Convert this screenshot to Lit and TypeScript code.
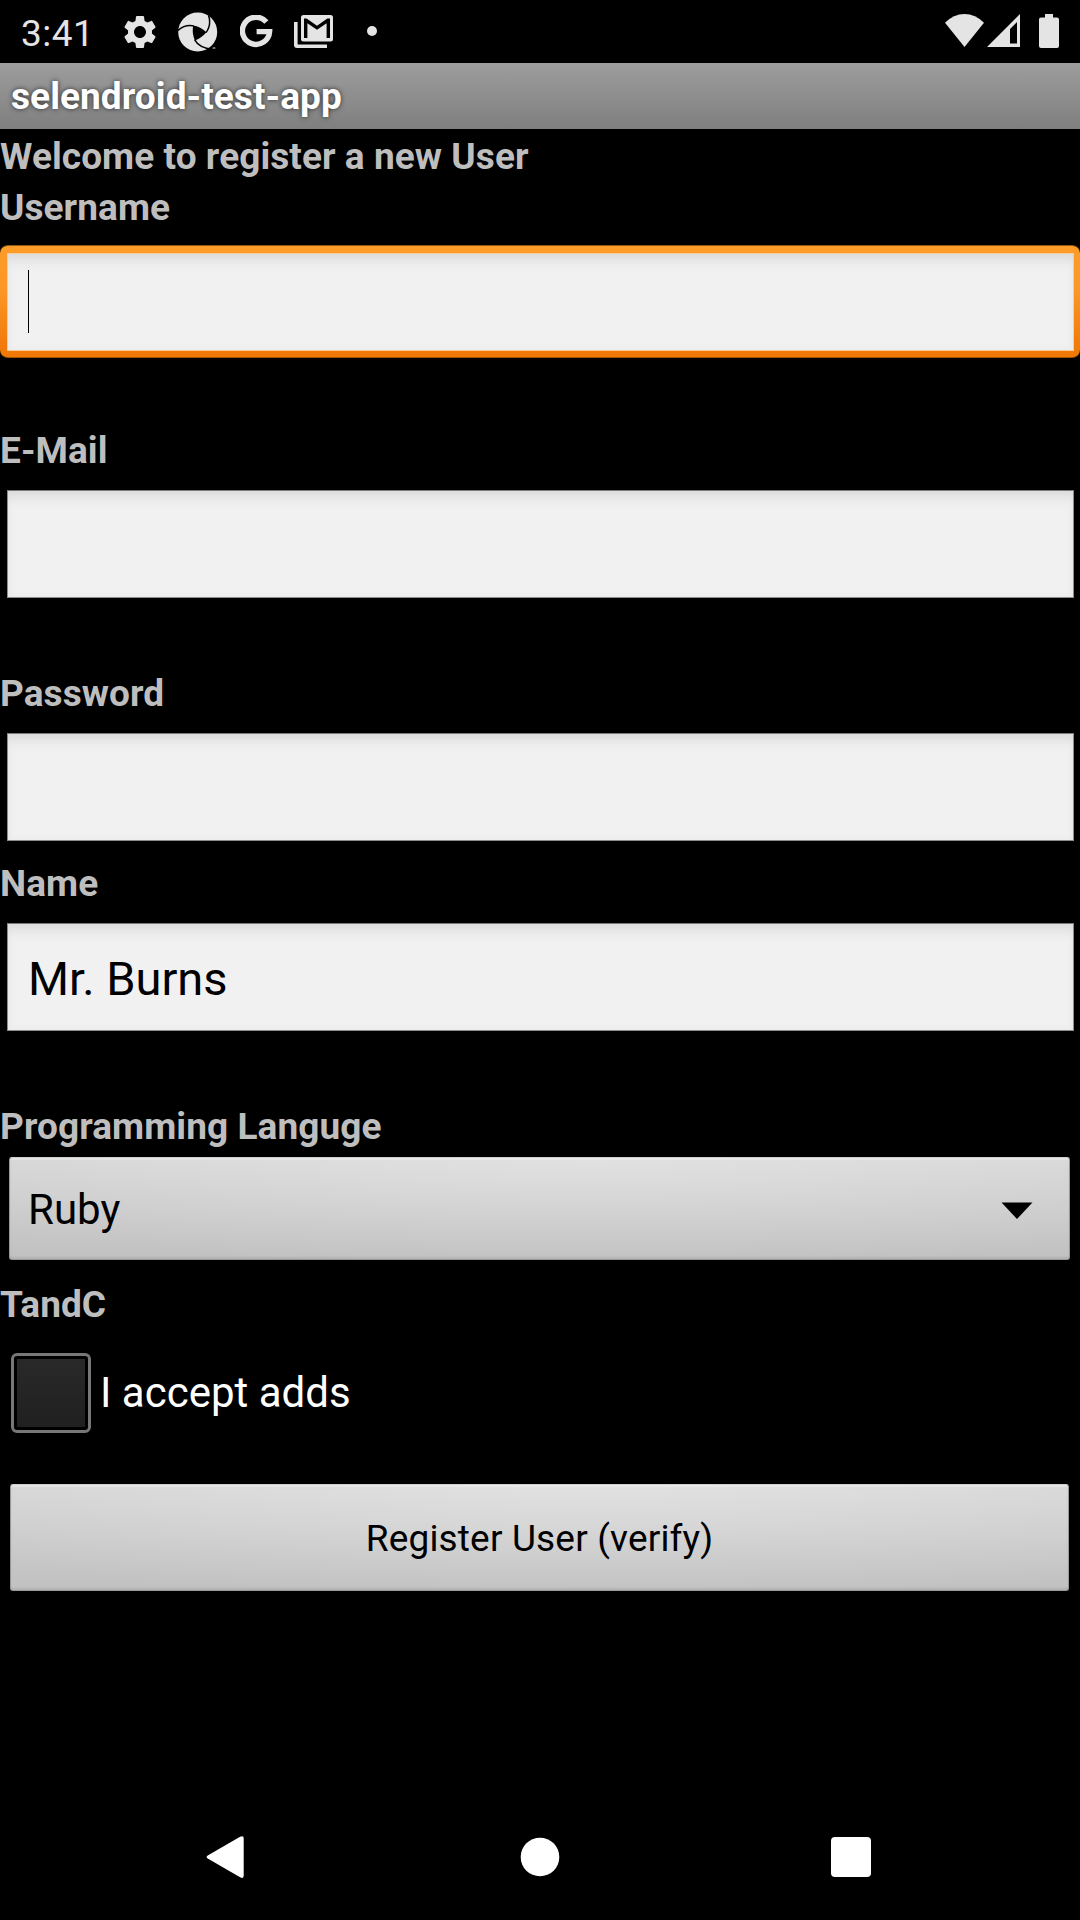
import { LitElement, html, css, svg, nothing } from "lit";
import { customElement, property } from "lit/decorators.js";

@customElement("status-bar")
class StatusBar extends LitElement {
  static styles = css`
    :host {
      display: flex;
      height: 63px;
      box-sizing: border-box;
      padding: 0 21px 0 21px;
      justify-content: space-between;
      align-items: flex-start;
      color: #e4e4e4;
      background: #000;
    }
    .left,
    .right {
      display: flex;
      align-items: flex-start;
      height: 63px;
    }
    .clock {
      width: 99px;
      font-size: 37px;
      line-height: 67px;
      letter-spacing: 0.5px;
      white-space: nowrap;
    }
    svg {
      display: block;
      fill: #e4e4e4;
    }
    .gear { margin: 11.7px 0 0 0; }
    .shutter { margin: 11.5px 0 0 18px; }
    .g { margin: 15px 0 0 22px; }
    .mail { margin: 15px 0 0 21px; }
    .dot {
      width: 10px;
      height: 10px;
      margin: 26px 0 0 34px;
      border-radius: 50%;
      background: #e4e4e4;
    }
    .wifi { margin: 14px 0 0; }
    .signal { margin: 14px 0 0 3px; }
    .battery { margin: 14px 0 0 19px; }
  `;

  render() {
    return html`
      <div class="left">
        <span class="clock">3:41</span>
        <svg class="gear" width="40" height="40" viewBox="0 0 24 24">
          <path d="M19.14,12.94c0.04-0.3,0.06-0.61,0.06-0.94c0-0.32-0.02-0.64-0.07-0.94l2.03-1.58c0.18-0.14,0.23-0.41,0.12-0.61l-1.92-3.32c-0.12-0.22-0.37-0.29-0.59-0.22l-2.39,0.96c-0.5-0.38-1.03-0.7-1.62-0.94L14.4,2.81c-0.04-0.24-0.24-0.41-0.48-0.41h-3.84c-0.24,0-0.43,0.17-0.47,0.41L9.25,5.35C8.66,5.59,8.12,5.92,7.63,6.29L5.24,5.33c-0.22-0.08-0.47,0-0.59,0.22L2.74,8.87C2.62,9.08,2.66,9.34,2.86,9.48l2.03,1.58C4.84,11.36,4.8,11.69,4.8,12s0.02,0.64,0.07,0.94l-2.03,1.58c-0.18,0.14-0.23,0.41-0.12,0.61l1.92,3.32c0.12,0.22,0.37,0.29,0.59,0.22l2.39-0.96c0.5,0.38,1.03,0.7,1.62,0.94l0.36,2.54c0.05,0.24,0.24,0.41,0.48,0.41h3.84c0.24,0,0.44-0.17,0.47-0.41l0.36-2.54c0.59-0.24,1.13-0.56,1.62-0.94l2.39,0.96c0.22,0.08,0.47,0,0.59-0.22l1.92-3.32c0.12-0.22,0.07-0.47-0.12-0.61L19.14,12.94z M12,15.6c-1.98,0-3.6-1.62-3.6-3.6s1.62-3.6,3.6-3.6s3.6,1.62,3.6,3.6S13.98,15.6,12,15.6z"></path>
        </svg>
        <svg class="shutter" width="40" height="40" viewBox="0 0 40 40">
          <circle cx="19.7" cy="20" r="19.5"></circle>
          <path fill="#000" d="M15.2 13.6Q22.5 14.8 28.4 20.2Q24 25.6 16.9 28.4Q13.6 21 15.2 13.6Z"></path>
          <path fill="none" stroke="#000" stroke-width="1.5" d="M15.8 13.9Q6 12.4 0 18.6M28 20.6Q33.6 13 30.6 3.6M16.6 27.6Q21 36 34.5 37.2"></path>
          <rect x="34.5" y="35.6" width="3" height="1" rx=".5"></rect>
        </svg>
        <svg class="g" width="33" height="33" viewBox="0 0 33 33">
          <path fill="none" stroke="#e4e4e4" stroke-width="5.4" d="M26.4 7A13.6 13.6 0 1 0 29.6 16.6H16.6"></path>
        </svg>
        <svg class="mail" width="39" height="33" viewBox="0 0 39 33">
          <path d="M0 7H3.6V29.4H33V33H3Q0 33 0 30Z"></path>
          <path fill-rule="evenodd" d="M9.5 0H36.5Q39 0 39 2.5V24Q39 26.5 36.5 26.5H9.5Q7 26.5 7 24V2.5Q7 0 9.5 0ZM10 3.4V23H13.4V8.2L23 14.8L32.6 8.2V23H36V3.4H33.4L23 10.8L12.6 3.4Z"></path>
        </svg>
        <span class="dot"></span>
      </div>
      <div class="right">
        <svg class="wifi" width="39" height="33" viewBox="0 0 39 33">
          <path d="M0 8.8Q8.6 0 19.5 0T39 8.8L19.5 33Z"></path>
        </svg>
        <svg class="signal" width="33" height="33" viewBox="0 0 33 33">
          <path fill-rule="evenodd" d="M33 0V33H0ZM30 8L23 15V29.6H30Z"></path>
        </svg>
        <svg class="battery" width="20" height="34" viewBox="0 0 20 34">
          <path d="M6 0H14V3.4H18Q20 3.4 20 5.4V32Q20 34 18 34H2Q0 34 0 32V5.4Q0 3.4 2 3.4H6Z"></path>
        </svg>
      </div>
    `;
  }
}

@customElement("text-field")
class TextField extends LitElement {
  @property() value = "";
  @property({ type: Boolean }) active = false;

  static styles = css`
    :host {
      display: block;
    }
    .field {
      display: flex;
      align-items: center;
      box-sizing: border-box;
      height: 108px;
      margin: 0 6.5px;
      padding: 3px 0 0 20.5px;
      border: 1px solid #8c8c8c;
      border-top-color: #7a7a7a;
      background: #f1f1f1;
      box-shadow: inset 0 14px 14px -9px #d9d9d9, inset 0 0 7px #e8e8e8;
      color: #000;
      font-size: 47px;
      line-height: 56px;
    }
    .ring {
      height: 113px;
      box-sizing: border-box;
      padding: 6.5px 6.5px 6px;
      border-top: 1px solid #8a5415;
      border-bottom: 1px solid #a35304;
      border-radius: 8px;
      background: linear-gradient(#fd9c28 0%, #fb9726 40%, #f17a09 90%, #f07805 100%);
    }
    .ring .field {
      height: 98px;
      margin: 0;
      padding-top: 0;
      border-color: #f8cb98;
    }
    .caret {
      width: 1px;
      height: 63px;
      margin-bottom: 1px;
      background: #000;
    }
  `;

  render() {
    const field = html`<div class="field">
      ${this.active ? html`<span class="caret"></span>` : nothing}${this.value}
    </div>`;
    return this.active ? html`<div class="ring">${field}</div>` : field;
  }
}

@customElement("nav-bar")
class NavBar extends LitElement {
  static styles = css`
    :host {
      display: grid;
      grid-template-columns: repeat(3, 1fr);
      width: 936px;
      height: 126px;
      margin: 0 auto;
      align-items: center;
      justify-items: center;
    }
    svg {
      display: block;
      fill: #fff;
    }
  `;

  render() {
    const shapes = [
      svg`<path d="M1.7 19.6L34.1 .8Q37.7 -1 37.7 2.6V39.4Q37.7 43.2 34.1 41.2L1.7 22.6Q-.5 21 1.7 19.6Z"></path>`,
      svg`<circle cx="22" cy="21" r="19.3"></circle>`,
      svg`<rect x="1" y="1" width="40" height="40" rx="4"></rect>`,
    ];
    return shapes.map(
      (shape) => html`<svg width="44" height="42" viewBox="0 0 44 42" overflow="visible">${shape}</svg>`,
    );
  }
}

@customElement("app-root")
class AppRoot extends LitElement {
  static styles = css`
    :host {
      display: flex;
      flex-direction: column;
      width: 1080px;
      height: 1920px;
      overflow: hidden;
      background: #000;
      font-family: Roboto, "Liberation Sans", sans-serif;
    }
    .title {
      height: 66px;
      box-sizing: border-box;
      padding-left: 11px;
      background: linear-gradient(#9d9d9d, #7f7f7f);
      color: #fff;
      font-size: 37px;
      font-weight: 700;
      line-height: 68px;
      letter-spacing: 0.07px;
      text-shadow: 0 0 5px rgba(0, 0, 0, 0.7);
    }
    .form {
      flex: 1;
      display: flex;
      flex-direction: column;
      padding-top: 2px;
    }
    .label {
      height: 51px;
      color: #bebebe;
      font-size: 37px;
      font-weight: 700;
      line-height: 51px;
      letter-spacing: 0.07px;
    }
    .label + text-field { margin-top: 14px; }
    .label + text-field[active] { margin-top: 12px; }
    .email { margin-top: 67px; }
    .password { margin-top: 70px; }
    .name { margin-top: 17px; }
    .language { margin-top: 70px; }
    .terms { margin-top: 19px; }
    .select,
    .button {
      display: flex;
      align-items: center;
      box-sizing: border-box;
      border: 1px solid #989898;
      border-top-color: #cfcfcf;
      border-radius: 3px;
      background: radial-gradient(ellipse 75% 110% at 55% 0%, rgba(255, 255, 255, 0.3), rgba(255, 255, 255, 0)),
        linear-gradient(#d5d5d5, #c1c1c1);
      box-shadow: inset 0 2px 1px rgba(255, 255, 255, 0.3), inset 0 -2px 2px rgba(0, 0, 0, 0.08);
      color: #000;
    }
    .select {
      height: 103px;
      margin: 5px 10px 0 9px;
      padding: 2px 36px 0 18px;
      justify-content: space-between;
      font-size: 42px;
      line-height: 50px;
    }
    .arrow {
      display: block;
      margin-top: 1px;
    }
    .check {
      display: flex;
      align-items: center;
      height: 80px;
      margin: 23px 0 0 11px;
      gap: 9px;
      color: #fff;
      font-size: 42px;
      line-height: 50px;
    }
    .box {
      width: 80px;
      height: 80px;
      box-sizing: border-box;
      padding: 3px;
      border: 3px solid #777;
      border-radius: 6px;
      background: linear-gradient(#292929, #202020) content-box;
    }
    .button {
      height: 107px;
      margin: 51px 11px 0 10px;
      padding-top: 2px;
      justify-content: center;
      font-size: 37px;
      line-height: 44px;
      letter-spacing: 0.17px;
    }
  `;

  render() {
    return html`
      <status-bar></status-bar>
      <div class="title">selendroid-test-app</div>
      <div class="form">
        <div class="label">Welcome to register a new User</div>
        <div class="label">Username</div>
        <text-field active></text-field>
        <div class="label email">E-Mail</div>
        <text-field></text-field>
        <div class="label password">Password</div>
        <text-field></text-field>
        <div class="label name">Name</div>
        <text-field value="Mr. Burns"></text-field>
        <div class="label language">Programming Languge</div>
        <div class="select">
          <span>Ruby</span>
          <svg class="arrow" width="32" height="17" viewBox="0 0 32 17"><path d="M.5 .5H31.5L16 17Z"></path></svg>
        </div>
        <div class="label terms">TandC</div>
        <div class="check"><span class="box"></span><span>I accept adds</span></div>
        <div class="button">Register User (verify)</div>
      </div>
      <nav-bar></nav-bar>
    `;
  }
}
